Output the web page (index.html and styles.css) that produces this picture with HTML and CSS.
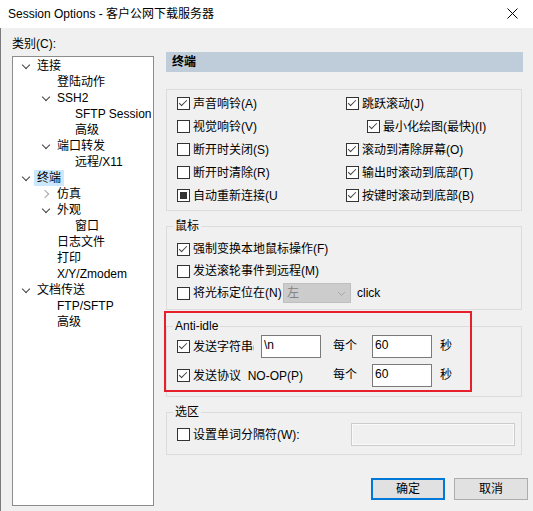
FILE: index.html
```html
<!doctype html>
<html lang="zh-CN">
  <head>
    <meta charset="UTF-8" />
    <meta name="viewport" content="width=device-width, initial-scale=1.0" />
    <title>Session Options</title>
    <link rel="stylesheet" href="styles.css">
  </head>
  <body>
    <div class="titlebar">
      <span class="title">Session Options - 客户公网下载服务器</span>
      <svg class="close" width="11" height="11" viewBox="0 0 11 11">
        <path d="M0.5 0.5 L10.5 10.5 M10.5 0.5 L0.5 10.5" stroke="#000" stroke-width="1" fill="none" />
      </svg>
    </div>

    <div class="dialog">
      <div class="sidebar">
        <div class="category-label">类别(C):</div>
        <ul class="tree">
          <li class="node lvl0"><span class="twisty open"></span><span class="label">连接</span></li>
          <li class="node lvl1"><span class="twisty"></span><span class="label">登陆动作</span></li>
          <li class="node lvl1"><span class="twisty open"></span><span class="label">SSH2</span></li>
          <li class="node lvl2"><span class="twisty"></span><span class="label">SFTP Session</span></li>
          <li class="node lvl2"><span class="twisty"></span><span class="label">高级</span></li>
          <li class="node lvl1"><span class="twisty open"></span><span class="label">端口转发</span></li>
          <li class="node lvl2"><span class="twisty"></span><span class="label">远程/X11</span></li>
          <li class="node lvl0"><span class="twisty open"></span><span class="label selected">终端</span></li>
          <li class="node lvl1"><span class="twisty closed"></span><span class="label">仿真</span></li>
          <li class="node lvl1"><span class="twisty open"></span><span class="label">外观</span></li>
          <li class="node lvl2"><span class="twisty"></span><span class="label">窗口</span></li>
          <li class="node lvl1"><span class="twisty"></span><span class="label">日志文件</span></li>
          <li class="node lvl1"><span class="twisty"></span><span class="label">打印</span></li>
          <li class="node lvl1"><span class="twisty"></span><span class="label">X/Y/Zmodem</span></li>
          <li class="node lvl0"><span class="twisty open"></span><span class="label">文档传送</span></li>
          <li class="node lvl1"><span class="twisty"></span><span class="label">FTP/SFTP</span></li>
          <li class="node lvl1"><span class="twisty"></span><span class="label">高级</span></li>
        </ul>
      </div>

      <div class="main">
        <div class="panel-title">终端</div>

        <div class="group options">
          <div class="opt"><span class="cb on"></span>声音响铃(A)</div>
          <div class="opt"><span class="cb on"></span>跳跃滚动(J)</div>
          <div class="opt"><span class="cb"></span>视觉响铃(V)</div>
          <div class="opt sub"><span class="cb on"></span>最小化绘图(最快)(I)</div>
          <div class="opt"><span class="cb"></span>断开时关闭(S)</div>
          <div class="opt"><span class="cb on"></span>滚动到清除屏幕(O)</div>
          <div class="opt"><span class="cb"></span>断开时清除(R)</div>
          <div class="opt"><span class="cb on"></span>输出时滚动到底部(T)</div>
          <div class="opt"><span class="cb mixed"></span>自动重新连接(U</div>
          <div class="opt"><span class="cb on"></span>按键时滚动到底部(B)</div>
        </div>

        <fieldset class="group mouse">
          <legend>鼠标</legend>
          <div class="opt"><span class="cb on"></span>强制变换本地鼠标操作(F)</div>
          <div class="opt"><span class="cb"></span>发送滚轮事件到远程(M)</div>
          <div class="opt">
            <span class="cb"></span><span class="cursor-label">将光标定位在(N)</span>
            <span class="combo">左
              <svg class="combo-arrow" width="9" height="9" viewBox="0 0 9 9">
                <polyline points="1,3 4.5,6.5 8,3" stroke="#a8a8a8" fill="none" />
              </svg>
            </span>
            <span class="after-combo">click</span>
          </div>
        </fieldset>

        <fieldset class="group anti-idle">
          <legend>Anti-idle</legend>
          <div class="idle-grid">
            <div class="opt"><span class="cb on"></span><span class="clip">发送字符串(S)</span></div>
            <div class="field">\n</div>
            <div class="unit">每个</div>
            <div class="field">60</div>
            <div class="unit">秒</div>

            <div class="opt wide"><span class="cb on"></span>发送协议&nbsp; NO-OP(P)</div>
            <div class="unit">每个</div>
            <div class="field">60</div>
            <div class="unit">秒</div>
          </div>
        </fieldset>

        <fieldset class="group selection">
          <legend>选区</legend>
          <div class="opt">
            <span class="cb"></span><span class="sep-label">设置单词分隔符(W):</span>
            <span class="field disabled"></span>
          </div>
        </fieldset>

        <div class="buttons">
          <button class="btn default">确定</button>
          <button class="btn">取消</button>
        </div>

        <div class="highlight-box"></div>
      </div>
    </div>
  </body>
</html>
```

FILE: styles.css
```css
* {
  margin: 0;
  padding: 0;
  box-sizing: border-box;
}

body {
  width: 533px;
  height: 511px;
  overflow: hidden;
  font-family: "Liberation Sans", "Noto Sans CJK SC", sans-serif;
  font-size: 12px;
  line-height: 16px;
  color: #000;
  background: #f0f0f0;
}

/* window title */
.titlebar {
  height: 28px;
  background: #fff;
  display: flex;
  align-items: center;
  justify-content: space-between;
  padding-left: 8px;
}

.title {
  font-size: 12px;
}

.close {
  margin-right: 15px;
  margin-top: -2px;
}

.dialog {
  display: flex;
  height: 483px;
  border-left: 1px solid #7a7a7a;
}

/* category tree */
.sidebar {
  padding: 8px 0 0 11px;
  width: 165px;
}

.category-label {
  height: 16px;
  margin-bottom: 4px;
}

.tree {
  list-style: none;
  width: 142px;
  height: 450px;
  background: #fff;
  border: 1px solid #8c8c8c;
  padding-top: 1px;
}

.node {
  display: flex;
  align-items: center;
  height: 16px;
  white-space: nowrap;
}

.lvl0 {
  padding-left: 8px;
}

.lvl1 {
  padding-left: 28px;
}

.lvl2 {
  padding-left: 46px;
}

.twisty {
  width: 16px;
  height: 16px;
  flex-shrink: 0;
  position: relative;
}

.twisty.open::before,
.twisty.closed::before {
  content: "";
  position: absolute;
  width: 5px;
  height: 5px;
  border: solid #404040;
  border-width: 0 1px 1px 0;
}

.twisty.open::before {
  left: 2px;
  top: 4px;
  transform: rotate(45deg);
}

.twisty.closed::before {
  left: 1px;
  top: 5px;
  border-color: #a6a6a6;
  transform: rotate(-45deg);
}

.label {
  line-height: 16px;
}

.label.selected {
  background: #cce8ff;
  padding: 0 3px;
  margin-left: -3px;
}

/* right panel */
.main {
  position: relative;
  width: 357px;
  padding-top: 24px;
}

.panel-title {
  height: 20px;
  line-height: 20px;
  padding-left: 6px;
  background: #bfcddb;
  font-weight: bold;
}

.group {
  width: 356px;
  border: 1px solid #dcdcdc;
  min-width: 0;
}

legend {
  padding: 0 2px;
  margin-left: -4px;
  line-height: 16px;
}

.opt {
  display: flex;
  align-items: center;
  white-space: nowrap;
}

.opt > * {
  flex-shrink: 0;
}

.cb {
  width: 13px;
  height: 13px;
  border: 1px solid #333;
  background: #fff;
  margin-right: 3px;
  position: relative;
}

.cb.on::after {
  content: "";
  position: absolute;
  left: 3px;
  top: 0;
  width: 3px;
  height: 7px;
  border: solid #404040;
  border-width: 0 1px 1px 0;
  transform: rotate(45deg);
}

.cb.mixed::after {
  content: "";
  position: absolute;
  left: 2px;
  top: 2px;
  width: 7px;
  height: 7px;
  background: #333;
}

.options {
  margin-top: 17px;
  display: grid;
  grid-template-columns: 169px 1fr;
  grid-auto-rows: 23px;
  padding: 2px 10px 3px;
}

.options .sub {
  padding-left: 21px;
}

.mouse {
  margin-top: 7px;
  padding: 4px 10px 5px;
}

.mouse .opt {
  height: 22px;
}

.cursor-label {
  width: 90px;
}

.combo {
  width: 68px;
  height: 20px;
  background: #cccccc;
  border: 1px solid #bfbfbf;
  color: #838383;
  padding-left: 3px;
  line-height: 18px;
  display: flex;
  align-items: center;
  justify-content: space-between;
}

.combo-arrow {
  margin-right: 4px;
}

.after-combo {
  margin-left: 6px;
}

.anti-idle {
  margin-top: 8px;
  padding: 1px 10px 9px;
}

.idle-grid {
  display: grid;
  grid-template-columns: 84px 72px 39px 68px auto;
  grid-auto-rows: 23px;
  row-gap: 6px;
  align-items: center;
}

.idle-grid .wide {
  grid-column: span 2;
}

.clip {
  display: block;
  width: 61px;
  overflow: hidden;
}

.field {
  width: 60px;
  height: 23px;
  background: #fff;
  border: 1px solid #7a7a7a;
  padding-left: 2px;
  line-height: 19px;
}

.unit {
  line-height: 23px;
}

.selection {
  margin-top: 7px;
  padding: 3px 0 8px 10px;
}

.selection .opt {
  height: 23px;
}

.sep-label {
  width: 158px;
}

.field.disabled {
  width: 164px;
  border-color: #cccccc;
  background: #f0f0f0;
  box-shadow: inset 0 0 0 1px #fafafa;
}

.buttons {
  display: flex;
  gap: 9px;
  margin-top: 23px;
  padding-left: 205px;
}

.btn {
  width: 74px;
  height: 22px;
  font: inherit;
  background: #e1e1e1;
  border: 1px solid #adadad;
  flex-shrink: 0;
}

.btn.default {
  border: 2px solid #0078d7;
}

/* annotation drawn over the Anti-idle group */
.highlight-box {
  position: absolute;
  left: -2px;
  top: 283px;
  width: 308px;
  height: 81px;
  border: 2px solid #e5202a;
  pointer-events: none;
}
```
